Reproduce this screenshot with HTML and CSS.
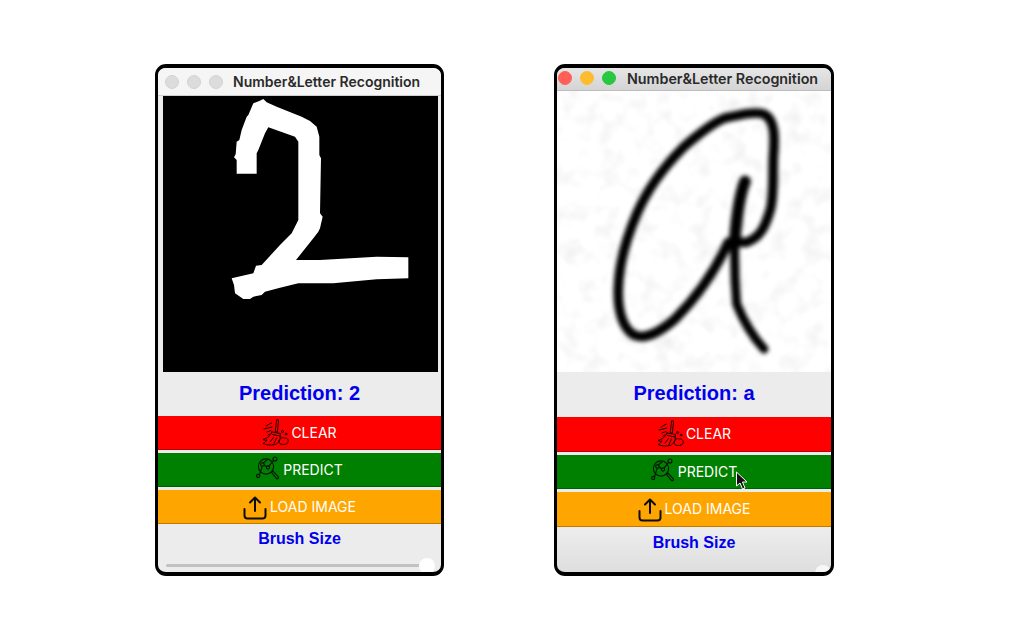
FILE: index.html
```html
<!DOCTYPE html>
<html lang="en">
<head>
<meta charset="utf-8">
<title>Number&amp;Letter Recognition</title>
<link rel="stylesheet" href="styles.css">
</head>
<body>
<main class="desktop">
  <section class="window window-idle">
    <header class="titlebar">
      <span class="light"></span><span class="light"></span><span class="light"></span>
      <h1 class="title">Number&amp;Letter Recognition</h1>
    </header>
    <div class="canvas-wrap">
      <svg class="canvas" viewBox="-171 3 825 828" preserveAspectRatio="none">
        <rect x="-171" y="3" width="825" height="828" fill="#000"/>
        <polygon fill="#fff" points="50,236 50,195 42,187 47,178 50,140 58,135 65,105 80,65 85,60 100,25 118,18 130,12 140,22 170,35 245,65 270,78 290,95 298,125 298,180 303,190 300,355 308,365 300,400 295,410 280,430 228,495 300,495 470,485 565,487 565,550 470,553 340,565 235,565 180,578 135,590 125,600 100,605 90,612 70,612 45,595 42,570 35,550 100,535 108,512 125,510 180,450 215,415 235,375 235,140 225,125 145,97 135,115 115,165 110,175 110,236"/>
      </svg>
    </div>
    <p class="prediction">Prediction: 2</p>
    <div class="actions">
      <button class="action action-red">
        <svg class="icon icon-broom" viewBox="0 0 27 27"><use href="#broom"/></svg><span>CLEAR</span>
      </button>
      <button class="action action-green">
        <svg class="icon icon-search" viewBox="0 0 23 24"><use href="#search"/></svg><span>PREDICT</span>
      </button>
      <button class="action action-orange">
        <svg class="icon icon-upload" viewBox="0 0 24 24"><use href="#upload"/></svg><span>LOAD IMAGE</span>
      </button>
    </div>
    <p class="brush-label">Brush Size</p>
    <div class="slider"><div class="track"></div><div class="thumb"></div></div>
  </section>

  <section class="window window-active">
    <header class="titlebar">
      <span class="light light-red"></span><span class="light light-amber"></span><span class="light light-green"></span>
      <h1 class="title">Number&amp;Letter Recognition</h1>
    </header>
    <div class="canvas-wrap">
      <svg class="canvas" viewBox="-129 -9 822 843" preserveAspectRatio="none">
        <defs>
          <filter id="soft" x="-10%" y="-10%" width="120%" height="120%"><feGaussianBlur stdDeviation="7"/></filter>
          <filter id="speckle" x="0" y="0" width="100%" height="100%">
            <feTurbulence type="fractalNoise" baseFrequency="0.018" numOctaves="2" seed="7"/>
            <feColorMatrix type="matrix" values="0 0 0 0 0.55  0 0 0 0 0.55  0 0 0 0 0.55  1.1 0 0 0 -0.52"/>
          </filter>
        </defs>
        <rect x="-129" y="-9" width="822" height="843" fill="#fff"/>
        <rect x="-129" y="-9" width="822" height="843" filter="url(#speckle)" opacity="0.5"/>
        <g filter="url(#soft)" fill="none" stroke="#000" stroke-linecap="round" stroke-linejoin="round">
          <path stroke-width="29" d="M385 445 C350 520 300 600 225 675 C185 710 135 740 100 722 C65 700 52 640 55 580 C58 500 80 430 110 360 C140 290 190 220 250 160 C290 125 340 85 375 72 C420 62 470 50 495 62 C525 80 525 130 520 190 C518 250 522 310 510 350 C495 400 480 430 440 445 L385 445"/>
          <path stroke-width="35" d="M435 262 C420 300 410 370 405 430"/>
          <path stroke-width="27" d="M405 430 C402 500 405 570 410 630 C430 680 460 730 492 765"/>
        </g>
      </svg>
    </div>
    <p class="prediction">Prediction: a</p>
    <div class="actions">
      <button class="action action-red">
        <svg class="icon icon-broom" viewBox="0 0 27 27"><use href="#broom"/></svg><span>CLEAR</span>
      </button>
      <button class="action action-green">
        <svg class="icon icon-search" viewBox="0 0 23 24"><use href="#search"/></svg><span>PREDICT</span>
        <svg class="cursor" viewBox="0 0 12 19"><path d="M1 1 L1 15 L4.5 12 L7 18 L9.5 17 L7 11 L11.5 11 Z" fill="#111" stroke="#fff" stroke-width="1"/></svg>
      </button>
      <button class="action action-orange">
        <svg class="icon icon-upload" viewBox="0 0 24 24"><use href="#upload"/></svg><span>LOAD IMAGE</span>
      </button>
    </div>
    <p class="brush-label">Brush Size</p>
    <div class="slider"><div class="track"></div><div class="thumb"></div></div>
  </section>
</main>

<svg class="sprites" aria-hidden="true">
  <symbol id="broom" viewBox="0 0 27 27">
    <g fill="none" stroke="#1a0000" stroke-width="1" stroke-linecap="round" stroke-linejoin="round">
      <path d="M15 0.8 L16.6 1 L15.4 13 L13.6 12.8 Z"/>
      <path d="M10 13 L18.5 14.5 L18 17 C19 20 17 24 13 25.5 C9 26.5 4 26 1 24.5 C3 23.5 4 22.5 5 21 C3 21.5 2 21 1 20.5 C5 19.5 8.5 17 10 13 Z"/>
      <path d="M10.5 15.5 L18 17 M8 23 L11.5 18.5 M12 24.5 L14.5 19"/>
      <path d="M17 22 C17 19.5 20 18 22.5 19 C25 18.5 27 21 26 23.5 C25 25.5 21 26 18.5 25 C17.5 24.5 17 23.5 17 22 Z"/>
      <path d="M4 7 L9.5 4 M2 10 L10 8 M5 13 L9 11.5 M6 16 L8 15"/>
      <circle cx="20.5" cy="12.5" r="1"/>
      <circle cx="24" cy="15" r="0.9"/>
    </g>
  </symbol>
  <symbol id="search" viewBox="0 0 23 24">
    <g fill="none" stroke="#041204" stroke-width="1.1" stroke-linecap="round" stroke-linejoin="round">
      <circle cx="10" cy="10.5" r="7.6"/>
      <circle cx="19" cy="3" r="2"/>
      <circle cx="2.2" cy="20" r="1.6"/>
      <circle cx="6.5" cy="8.5" r="1.8"/>
      <circle cx="12" cy="11.5" r="1.6"/>
      <path d="M17.5 4.5 L13 10.2 M3.4 19 L6.2 10.3 M8.2 9 L10.6 10.8 M11 4 L7 7"/>
      <path d="M15.5 16.5 L17 15.2 L22.3 20.8 C23 21.8 21.6 23.4 20.6 22.6 Z"/>
    </g>
  </symbol>
  <symbol id="upload" viewBox="0 0 24 24">
    <g fill="none" stroke="#0d0d0d" stroke-width="2" stroke-linecap="round" stroke-linejoin="round">
      <path d="M12 15 L12 2 M7 6.5 L12 1.5 L17 6.5"/>
      <path d="M1.5 13 L1.5 19.5 C1.5 21.5 2.5 22.5 4.5 22.5 L19.5 22.5 C21.5 22.5 22.5 21.5 22.5 19.5 L22.5 13"/>
    </g>
  </symbol>
</svg>
</body>
</html>
```

FILE: styles.css
```css
* { box-sizing: border-box; }

html, body {
  margin: 0;
  height: 100%;
  background: #fff;
  overflow: hidden;
}

.desktop {
  display: flex;
  gap: 110px;
  padding: 64px 0 0 155px;
}

.sprites { display: none; }

.window {
  display: flex;
  flex-direction: column;
  height: 512px;
  border-style: solid;
  border-color: #000;
  border-width: 4px 3px;
  border-radius: 11px;
  background: #ececec;
  overflow: hidden;
  font-family: "Liberation Sans", Arial, sans-serif;
}

.window-idle { width: 289px; }
.window-active {
  width: 280px;
  background: linear-gradient(#ececec 0, #ececec 92%, #dedede 100%);
}

/* title bar */
.titlebar {
  display: flex;
  align-items: center;
  gap: 8px;
  flex: none;
  background: #f5f5f5;
  border-bottom: 1px solid #cfcfcf;
}

.window-idle .titlebar { height: 28px; padding: 0 0 0 7px; }
.window-active .titlebar {
  height: 23px;
  padding: 0 0 2px 1px;
  background: linear-gradient(#e6e6e6, #d4d4d4);
  border-bottom-color: #bdbdbd;
}

.light {
  flex: none;
  width: 14px;
  height: 14px;
  border-radius: 50%;
  background: #dcdcdc;
  border: 1px solid #d2d2d2;
}

.light-red { background: #ff5f57; border-color: #ff5f57; }
.light-amber { background: #febc2e; border-color: #febc2e; }
.light-green { background: #28c840; border-color: #28c840; }

.title {
  margin: 0;
  font-family: Inter, "Liberation Sans", sans-serif;
  font-size: 14px;
  font-weight: 600;
  color: #2a2a2a;
  white-space: nowrap;
}

.window-idle .title { margin-left: 2px; }
.window-active .title { margin-left: 3px; font-size: 14.3px; }

/* drawing area */
.canvas-wrap { flex: none; }
.window-idle .canvas-wrap { padding: 0 3px 0 5px; }
.canvas { display: block; width: 100%; }
.window-idle .canvas { height: 276px; }
.window-active .canvas { height: 281px; }

.prediction {
  flex: none;
  margin: 0;
  height: 44px;
  line-height: 43px;
  text-align: center;
  font-size: 20px;
  font-weight: 700;
  color: #0000ee;
}

.window-active .prediction { height: 45px; }

/* buttons */
.actions {
  display: flex;
  flex-direction: column;
  flex: none;
  gap: 3px;
}

.window-active .actions { gap: 3px; }

.action {
  position: relative;
  display: flex;
  align-items: center;
  justify-content: center;
  gap: 3px;
  height: 34px;
  margin: 0;
  padding: 0;
  border: 0;
  border-bottom: 1px solid rgba(0, 0, 0, 0.25);
  color: #fff;
  font-family: Inter, "Liberation Sans", sans-serif;
  font-size: 14px;
  font-weight: 400;
}

.window-active .action { height: 34.5px; }

.action-red { background: #ff0000; }
.action-green { background: #008000; }
.action-orange { background: #ffa500; }

.icon { display: block; flex: none; }
.icon-broom { width: 27px; height: 27px; margin-right: -1px; }
.icon-search { width: 23px; height: 24px; margin-right: 1px; margin-top: -3px; }
.icon-upload { width: 24px; height: 24px; margin-top: 3px; }

.cursor {
  position: absolute;
  left: 178px;
  top: 16px;
  width: 13px;
  height: 19px;
}

/* brush slider */
.brush-label {
  flex: none;
  margin: 0;
  height: 30px;
  line-height: 30px;
  text-align: center;
  font-size: 16px;
  font-weight: 700;
  color: #0000ee;
}

.window-active .brush-label { height: 32px; line-height: 32px; }

.slider {
  position: relative;
  flex: 1;
}

.track {
  position: absolute;
  left: 8px;
  right: 16px;
  top: 10px;
  height: 3px;
  border-radius: 2px;
  background: #c2c2c2;
}

.thumb {
  position: absolute;
  left: 261px;
  top: 4px;
  width: 16px;
  height: 16px;
  border-radius: 50%;
  background: #fff;
}

.window-active .track {
  left: 1px;
  right: 14px;
  top: 13px;
  height: 3px;
  background: #1a7fe0;
}

.window-active .thumb {
  left: 258px;
  top: 6px;
  background: #f7f7f7;
}
```
